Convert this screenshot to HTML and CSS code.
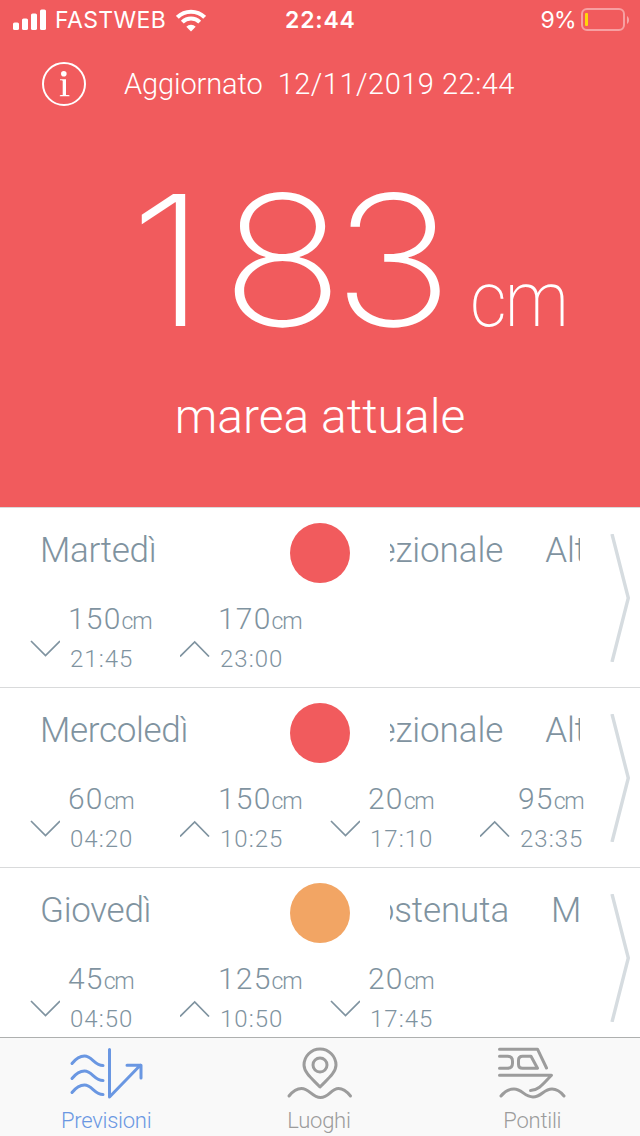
FILE: index.html
```html
<!DOCTYPE html>
<html lang="it">
<head>
<meta charset="utf-8">
<title>Previsioni marea</title>
<link rel="stylesheet" href="styles.css">
</head>
<body>
<div class="app">
  <header class="hero">
    <div class="status">
      <svg class="signal" width="34" height="22" viewBox="0 0 34 22" fill="#fff"><rect x="0" y="13.5" width="6" height="7.5" rx="1.6"/><rect x="9" y="9.5" width="6" height="11.5" rx="1.6"/><rect x="18" y="4.500" width="6" height="16.500" rx="1.6"/><rect x="27" y="0.500" width="6" height="20.500" rx="1.6"/></svg>
      <span class="carrier">FASTWEB</span>
      <svg class="wifi" width="30" height="23" viewBox="0 0 30 23" fill="none" stroke="#fff" stroke-width="4"><path d="M1.400 8.300a19.300 19.300 0 0 1 27.200 0"/><path d="M6.300 13.200a12.300 12.300 0 0 1 17.400 0"/><path d="M15 22.500l-4.700-4.700a6.600 6.600 0 0 1 9.400 0z" fill="#fff" stroke="none"/></svg>
      <span class="clock">22:44</span>
      <span class="percent">9%</span>
      <svg class="battery" width="49" height="24" viewBox="0 0 49 24"><rect x="1" y="1" width="42" height="21" rx="5" fill="none" stroke="#fff" stroke-opacity=".42" stroke-width="2"/><rect x="4" y="5" width="3" height="13" rx="1" fill="#ffd60a"/><path d="M46 8c2.700 1.500 2.700 6.500 0 8z" fill="#fff" fill-opacity=".45"/></svg>
    </div>
    <div class="updated">
      <svg class="info" width="44" height="44" viewBox="0 0 44 44"><circle cx="22" cy="22" r="21" fill="none" stroke="#fff" stroke-width="2"/><circle cx="21.800" cy="11.700" r="2.800" fill="#fff"/><path d="M18 17.200h6v15.800h2.200q1.300 0 1.300.5v.7H17.800v-.7q0-.5 1.200-.5h1.700V19.100q0-.8-1.200-.8H18z" fill="#fff"/></svg>
      <span class="updated-text"><span>Aggiornato</span><span class="stamp">12/11/2019 22:44</span></span>
    </div>
    <div class="level"><span class="level-value"><span class="lead">1</span>83</span><span class="level-unit">cm</span></div>
    <div class="caption">marea attuale</div>
  </header>

  <main class="days">
    <section class="day">
      <div class="head"><h2>Martedì</h2><i class="dot"></i><div class="ticker"><span class="tick-a">Eccezionale</span><span>Alta</span></div></div>
      <div class="tides">
        <div class="tide"><svg class="arrow" viewBox="0 0 30 17"><path d="M1 1l14.500 14.500L30 1"/></svg><p class="height">150<small>cm</small></p><p class="time">21:45</p></div>
        <div class="tide"><svg class="arrow" viewBox="0 0 30 17"><path d="M0 16.500L14.700 2l14.300 14.500"/></svg><p class="height">170<small>cm</small></p><p class="time">23:00</p></div>
      </div>
      <svg class="more" viewBox="0 0 20 128"><path d="M2 0l16.300 64L2 128"/></svg>
    </section>
    <section class="day">
      <div class="head"><h2>Mercoledì</h2><i class="dot"></i><div class="ticker"><span class="tick-a">Eccezionale</span><span>Alta</span></div></div>
      <div class="tides">
        <div class="tide"><svg class="arrow" viewBox="0 0 30 17"><path d="M1 1l14.500 14.500L30 1"/></svg><p class="height">60<small>cm</small></p><p class="time">04:20</p></div>
        <div class="tide"><svg class="arrow" viewBox="0 0 30 17"><path d="M0 16.500L14.700 2l14.300 14.500"/></svg><p class="height">150<small>cm</small></p><p class="time">10:25</p></div>
        <div class="tide"><svg class="arrow" viewBox="0 0 30 17"><path d="M1 1l14.500 14.500L30 1"/></svg><p class="height">20<small>cm</small></p><p class="time">17:10</p></div>
        <div class="tide"><svg class="arrow" viewBox="0 0 30 17"><path d="M0 16.500L14.700 2l14.300 14.500"/></svg><p class="height">95<small>cm</small></p><p class="time">23:35</p></div>
      </div>
      <svg class="more" viewBox="0 0 20 128"><path d="M2 0l16.300 64L2 128"/></svg>
    </section>
    <section class="day">
      <div class="head"><h2>Giovedì</h2><i class="dot dot-orange"></i><div class="ticker"><span class="tick-b">Sostenuta</span><span>Marea</span></div></div>
      <div class="tides">
        <div class="tide"><svg class="arrow" viewBox="0 0 30 17"><path d="M1 1l14.500 14.500L30 1"/></svg><p class="height">45<small>cm</small></p><p class="time">04:50</p></div>
        <div class="tide"><svg class="arrow" viewBox="0 0 30 17"><path d="M0 16.500L14.700 2l14.300 14.500"/></svg><p class="height">125<small>cm</small></p><p class="time">10:50</p></div>
        <div class="tide"><svg class="arrow" viewBox="0 0 30 17"><path d="M1 1l14.500 14.500L30 1"/></svg><p class="height">20<small>cm</small></p><p class="time">17:45</p></div>
      </div>
      <svg class="more" viewBox="0 0 20 128"><path d="M2 0l16.300 64L2 128"/></svg>
    </section>
  </main>

  <nav class="tabs">
    <a class="tab active"><svg width="80" height="56" viewBox="1 0 80 56"><path d="M6 20.500c4-5 8-7.500 12.500-7.500 7.500 0 10 9.500 18.500 9.500M6 35.500c4-5 8-7.500 12.500-7.500 7.500 0 10 9.500 18.500 9.500M6 49.500c4-5 8-7.500 12.500-7.500 7.500 0 10 9.500 18.500 9.500M43.500 6.500v47.500l31-32M61 22.300h14V35"/></svg><span>Previsioni</span></a>
    <a class="tab"><svg width="80" height="56" viewBox="1.5 0 80 56"><path d="M41.500 44C35 37 25.500 30 25.500 22a16 16 0 0 1 32 0c0 8-9.500 15-16 22z"/><circle cx="41.500" cy="22" r="7"/><path d="M10.500 53c4-5 8-7.500 12.500-7.500 8 0 10.500 9 19 9s10.500-9 18-9c4.500 0 8 2.500 12 7.500"/></svg><span class="luoghi">Luoghi</span></a>
    <a class="tab"><svg width="80" height="56" viewBox="0.5 0 80 56"><path d="M7 6.200h38l9 18.800M7 13.200h8q5 0 5 5v2q0 5-5 5H7M30 13.200h8.500l6.500 12H30q-4 0-4-4v-4q0-4 4-4zM7 32.200h52C51 40.500 46 47.500 38 47.500M8.500 53c4-5 8-7 13-7 8 0 10.500 8 19 8s10.500-8 19-8c4.500 0 8 2 12 7"/></svg><span class="pontili">Pontili</span></a>
  </nav>
</div>
</body>
</html>
```
FILE: styles.css
```css
* { box-sizing: border-box; }
body, p, h2 { margin: 0; }
body { background: #fff; font-family: Roboto, "Noto Sans", sans-serif; font-weight: 300; color: #7f93a0; }
svg { display: block; flex: none; }
.app { width: 640px; height: 1136px; overflow: hidden; display: flex; flex-direction: column; white-space: nowrap; }

.hero { height: 508px; flex: none; background: #f15b5d; color: #fff; border-bottom: 1px solid #d9dadb; }
.status { height: 40px; display: grid; grid-template-columns: 42px 121px 109px 1fr auto 49px; align-items: center; padding: 0 10px 0 13px; font-family: Inter, sans-serif; font-size: 23px; font-weight: 400; }
.carrier { letter-spacing: .4px; }
.clock { font-weight: 600; letter-spacing: .8px; }
.percent { margin-right: 5px; letter-spacing: -.7px; }
.updated { display: flex; align-items: center; height: 44px; margin: 22px 0 0 42px; }
.updated-text { display: flex; margin-left: 38px; font-size: 29px; letter-spacing: -.1px; }
.stamp { margin-left: 15px; letter-spacing: .5px; }
.level { display: flex; align-items: baseline; height: 180px; margin: 64px 0 0 129px; line-height: 180px; }
.level-value { width: 341px; font-family: Inter, sans-serif; font-size: 182px; font-weight: 150; letter-spacing: -10.5px; transform: scaleX(1.12); transform-origin: left; }
.lead { letter-spacing: 13px; }
.level-unit { font-size: 78px; font-weight: 200; letter-spacing: -2px; transform: scaleX(.92); transform-origin: left; }
.caption { margin-top: 32px; text-align: center; font-size: 48px; line-height: 70px; }

.days { height: 529px; flex: none; overflow: hidden; }
.day { position: relative; height: 180px; border-bottom: 1px solid #d9dadb; }
.head { display: grid; grid-template-columns: 250px 60px 230px; height: 90px; padding-left: 40px; align-items: start; }
.head h2 { font-size: 35px; font-weight: 340; line-height: 43px; padding-top: 21px; letter-spacing: -.3px; }
.dot { height: 60px; border-radius: 50%; background: #f15b5d; margin-top: 15px; }
.dot-orange { background: #f2a564; }
.ticker { display: flex; gap: 42px; width: 190px; margin-left: 40px; overflow: hidden; font-size: 35px; font-weight: 340; line-height: 43px; padding-top: 21px; letter-spacing: -.1px; }
.tick-a { margin-left: -68px; }
.tick-b { margin-left: -36px; }
.tides { display: grid; grid-template-columns: repeat(4, 150px); padding-left: 30px; }
.tide { display: grid; grid-template-columns: 30px 1fr; column-gap: 8px; grid-template-rows: 42px 36px; }
.arrow { width: 30px; height: 17px; grid-row: 2; fill: none; stroke: #7f93a0; stroke-width: 1.7; }
.height { grid-column: 2; grid-row: 1; font-size: 30px; line-height: 42px; letter-spacing: 1.2px; }
.height small { font-size: 23px; letter-spacing: -1.2px; }
.time { grid-column: 2; grid-row: 2; font-size: 24px; line-height: 38px; padding-left: 2px; letter-spacing: 1px; }
.more { position: absolute; left: 610px; top: 26px; width: 20px; height: 128px; fill: none; stroke: #d6dce0; stroke-width: 3.4; }

.tabs { height: 99px; flex: none; display: grid; grid-template-columns: repeat(3, 1fr); background: #f9f9f9; border-top: 1px solid #aeb0af; color: #9c9c9c; }
.tab { display: flex; flex-direction: column; align-items: center; padding-top: 5px; font-size: 22px; line-height: 43px; letter-spacing: -.25px; }
.tab svg { fill: none; stroke: currentColor; stroke-width: 3; stroke-linecap: round; stroke-linejoin: round; }
.active { color: #6a97e2; }
.active span { padding-right: 1px; }
.luoghi { padding-right: 2px; }
.pontili { padding-right: 2px; }
```
